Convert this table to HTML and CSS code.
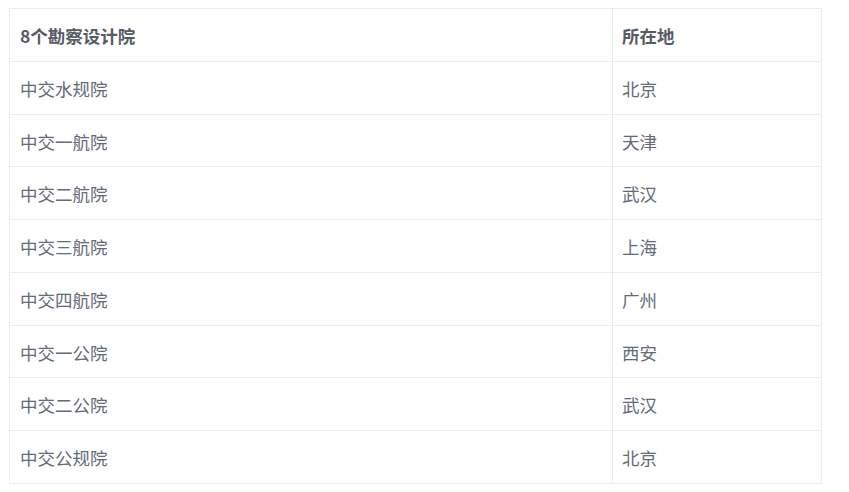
FILE: index.html
```html
<!DOCTYPE html>
<html lang="zh">
<head>
<meta charset="utf-8">
<link rel="stylesheet" href="styles.css">
</head>
<body>
<table class="tbl">
  <colgroup><col class="c1"><col class="c2"></colgroup>
  <thead>
    <tr><th>8个勘察设计院</th><th>所在地</th></tr>
  </thead>
  <tbody>
    <tr><td>中交水规院</td><td>北京</td></tr>
    <tr><td>中交一航院</td><td>天津</td></tr>
    <tr><td>中交二航院</td><td>武汉</td></tr>
    <tr><td>中交三航院</td><td>上海</td></tr>
    <tr><td>中交四航院</td><td>广州</td></tr>
    <tr><td>中交一公院</td><td>西安</td></tr>
    <tr><td>中交二公院</td><td>武汉</td></tr>
    <tr><td>中交公规院</td><td>北京</td></tr>
  </tbody>
</table>
</body>
</html>
```
FILE: styles.css
```css
html, body {
  margin: 0;
  background: #fff;
}
body {
  padding: 8px 0 0 9px;
  font-family: "Noto Sans CJK SC", "Noto Sans", sans-serif;
}
.tbl {
  border-collapse: collapse;
  width: 812px;
  table-layout: fixed;
  font-size: 17.5px;
  color: #636a78;
}
.c1 { width: 603px; }
.c2 { width: 209px; }
.tbl th, .tbl td {
  border: 1px solid #ececec;
  padding: 13px 10px 11px;
  line-height: 27.75px;
  text-align: left;
  vertical-align: middle;
}
.tbl th {
  font-weight: bold;
  color: #575b66;
}
.tbl td + td, .tbl th + th {
  padding-left: 9px;
}
```
